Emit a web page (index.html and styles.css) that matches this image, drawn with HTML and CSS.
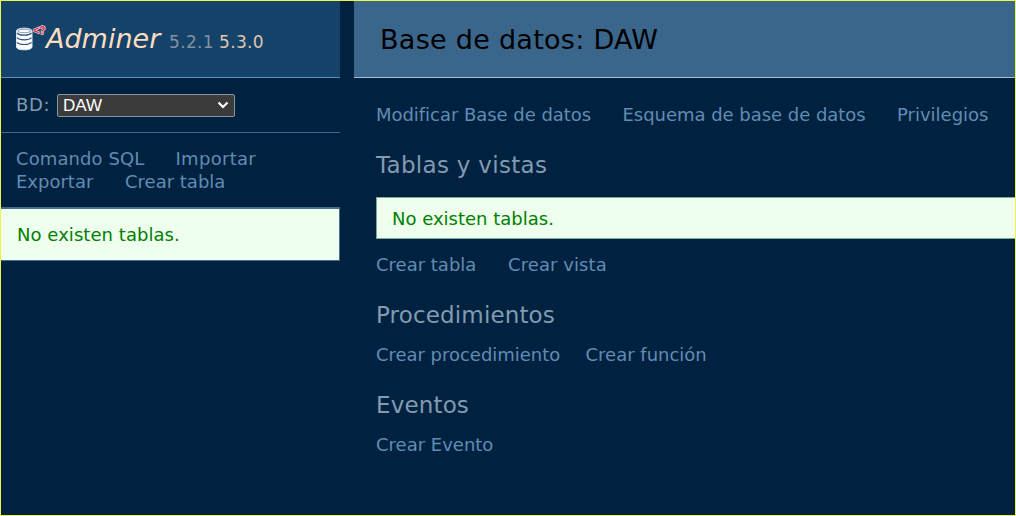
FILE: index.html
```html
<!DOCTYPE html>
<html lang="es">
<head>
<meta charset="utf-8">
<title>Base de datos: DAW - Adminer</title>
<link rel="stylesheet" href="styles.css">
</head>
<body>
<div class="page">
  <aside class="menu">
    <h1 class="brand">
      <svg class="logo" viewBox="0 0 32 28" width="32" height="28">
        <path class="drum" d="M1.500 8v16c0 3.800 15.500 3.800 15.500 0V8c0-3.800-15.500-3.800-15.500 0z"/>
        <ellipse class="lid" cx="9.250" cy="8" rx="6.500" ry="1.700"/>
        <path class="rings" d="M2 10c2.500 2.800 12 2.800 14.500 0M2 14.700c2.500 2.800 12 2.800 14.500 0M2 19.400c2.500 2.800 12 2.800 14.500 0"/>
        <text class="tag" x="18.300" y="10.500">&lt;?</text>
      </svg>
      <a class="name">Adminer</a>
      <span class="version">5.2.1</span>
      <a class="latest">5.3.0</a>
    </h1>
    <div class="db">
      <span class="db-label">BD:</span>
      <div class="select"><span>DAW</span>
        <svg class="chevron" viewBox="0 0 12 8" width="12" height="8"><path d="M1.500 1.500L6 6l4.500-4.500"/></svg>
      </div>
    </div>
    <div class="links side-links">
      <div class="row"><a class="sql">Comando SQL</a><a class="import">Importar</a></div>
      <div class="row"><a class="export">Exportar</a><a>Crear tabla</a></div>
    </div>
    <p class="message side-message">No existen tablas.</p>
  </aside>
  <main class="content">
    <h2 class="title">Base de datos: DAW</h2>
    <div class="body">
      <div class="row"><a class="alter">Modificar Base de datos</a><a class="schema">Esquema de base de datos</a><a class="privs">Privilegios</a></div>
      <h3 class="h-tables">Tablas y vistas</h3>
      <p class="message main-message">No existen tablas.</p>
      <div class="row"><a class="table">Crear tabla</a><a class="view">Crear vista</a></div>
      <h3 class="h-proc">Procedimientos</h3>
      <div class="row"><a class="proc">Crear procedimiento</a><a class="func">Crear función</a></div>
      <h3 class="h-events">Eventos</h3>
      <div class="row"><a>Crear Evento</a></div>
    </div>
  </main>
</div>
</body>
</html>
```
FILE: styles.css
```css
* { box-sizing: border-box; }
body { margin: 0; background: #002240; color: #829bb0; font: 18px/23px "DejaVu Sans", sans-serif; }
h1, h2, h3, p { margin: 0; font-weight: 400; }
a { color: #618cb3; white-space: nowrap; }
.page { display: flex; gap: 14px; width: 1016px; height: 516px; border: 1px solid #eff54a; overflow: hidden; }
.menu { flex: 0 0 339px; }
.content { flex: 1; min-width: 0; }
.brand { display: flex; align-items: baseline; height: 77px; padding: 20px 0 0 14px; background: #154269; border-bottom: 1px solid #618cb3; font-size: 18px; line-height: 36px; }
.logo { flex: none; align-self: flex-start; margin-top: 2px; }
.drum { fill: #fff; stroke: #dce5ee; }
.lid { fill: none; stroke: #6681a0; stroke-width: .8; }
.rings { fill: none; stroke: #2b5377; stroke-width: 1.2; }
.tag { fill: #dc2545; stroke: #f0d8de; stroke-width: 1.4; paint-order: stroke; font: bold 10px "Liberation Sans", sans-serif; }
.name { width: 123px; margin-left: -1px; color: #ffddbf; font-size: 27px; font-style: italic; }
.version { width: 50px; color: #8293a5; font-size: 17px; letter-spacing: .35px; }
.latest { color: #dfc6b2; font-size: 17px; letter-spacing: .35px; }
.db { display: flex; align-items: center; height: 55px; padding-left: 15px; border-bottom: 1px solid #3b6990; }
.db-label { width: 41px; margin-top: -2px; letter-spacing: .6px; }
.select { display: flex; align-items: center; justify-content: space-between; width: 178px; height: 23px; padding: 0 5px; border: 1px solid #8495a3; border-radius: 2px; background: #3b3b3b; color: #fff; font: 17px/21px "Liberation Sans", sans-serif; }
.chevron { fill: none; stroke: #fff; stroke-width: 2.2; }
.side-links { height: 74px; padding: 14px 0 0 15px; }
.row { display: flex; height: 23px; }
.sql { width: 159.5px; letter-spacing: .1px; }
.import { letter-spacing: .3px; }
.export { width: 109px; }
.message { background: #efe; color: #008000; }
.side-message { height: 54px; padding: 14px 15px 0 16px; border: solid #426e91; border-width: 2px 1px 1px 0; letter-spacing: .05px; }
.title { height: 77px; padding: 20px 0 0 26px; background: #3b668c; border-bottom: 1px solid #a3bed3; color: #000; font-size: 27px; line-height: 38px; letter-spacing: .28px; }
.body { padding: 25px 0 0 22px; }
.alter { width: 246.5px; letter-spacing: -.04px; }
.schema { width: 274.5px; letter-spacing: -.03px; }
.main-message { height: 42px; margin: 18px 0 14px; padding: 9px 15px; border: solid #7baa98; border-width: 1px 0 1px 1px; }
.table { width: 132px; }
.view { letter-spacing: .08px; }
.proc { width: 209.5px; letter-spacing: -.03px; }
.func { letter-spacing: 0; }
h3 { height: 27px; font-size: 23px; line-height: 27px; }
.h-tables { margin-top: 26px; letter-spacing: .3px; }
.h-proc, .h-events { margin: 26px 0 14px; letter-spacing: .15px; }
```
